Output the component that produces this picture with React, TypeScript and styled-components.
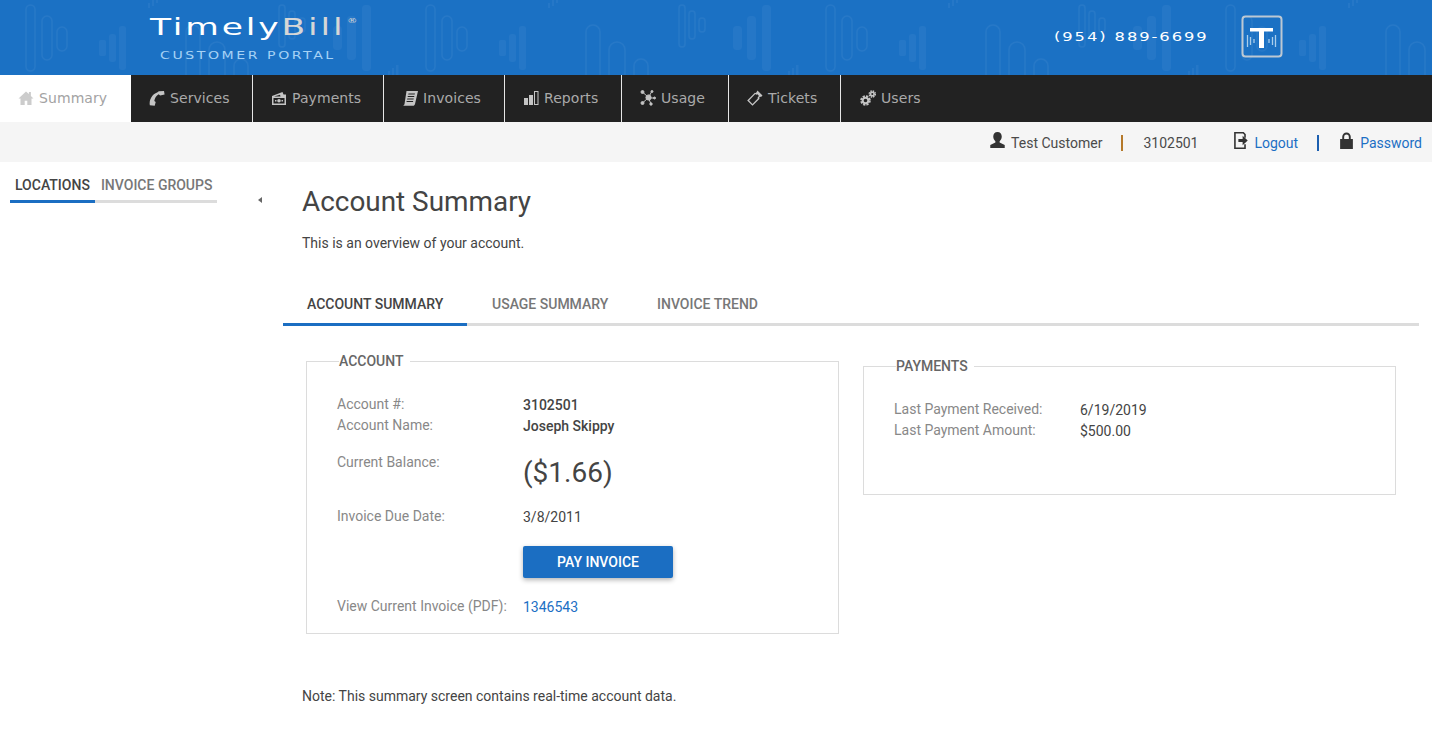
import React from 'react'
import styled, { createGlobalStyle } from 'styled-components'

const GlobalStyle = createGlobalStyle`
  html, body { margin: 0; padding: 0; background: #fff; }
  body { font-family: Roboto, "Liberation Sans", sans-serif; color: #444; font-size: 14px; }
  a { text-decoration: none; color: #1c6fc4; }
`

const Banner = styled.header`
  position: relative;
  height: 75px;
  background: #1b71c4;
  overflow: hidden;
`
const BannerArt = styled.svg`
  position: absolute;
  inset: 0;
  width: 100%;
  height: 100%;
`
const BannerInner = styled.div`
  position: relative;
  height: 100%;
  display: flex;
  align-items: flex-start;
`
const Brand = styled.div`
  margin-left: 150px;
  padding-top: 13px;
  width: 204px;
  display: flex;
  flex-direction: column;
`
const BrandName = styled.div`
  font-family: "DejaVu Sans", sans-serif;
  font-size: 23px;
  line-height: 29px;
  letter-spacing: 1.9px;
  color: #fff;
  white-space: nowrap;
  transform: scaleX(1.5);
  transform-origin: left center;
  span { color: #d6d6d6; }
  sup { font-size: 7px; line-height: 0; letter-spacing: 0; vertical-align: 12px; margin-left: 1px; color: #d6d6d6; }
`
const BrandSub = styled.div`
  margin: 7px 0 0 10px;
  font-family: "DejaVu Sans", sans-serif;
  font-size: 11px;
  line-height: 14px;
  letter-spacing: 2px;
  color: #a6d2f5;
  white-space: nowrap;
  transform: scaleX(1.28);
  transform-origin: left center;
`
const Phone = styled.div`
  margin-left: 700px;
  padding-top: 29px;
  width: 187px;
  font-family: "DejaVu Sans", sans-serif;
  font-size: 11.5px;
  line-height: 16px;
  letter-spacing: 1.35px;
  color: #fff;
  white-space: nowrap;
  transform: scaleX(1.42);
  transform-origin: left center;
`
const LogoMark = styled.svg`
  margin-top: 15px;
  width: 42px;
  height: 43px;
`

const Nav = styled.nav`
  display: flex;
  height: 47px;
  background: #222;
`
const NavItem = styled.a<{ $active?: boolean; $w: number; $pad: number; $last?: boolean }>`
  box-sizing: border-box;
  display: flex;
  align-items: center;
  gap: 5px;
  width: ${p => p.$w}px;
  padding: 0 0 2px ${p => p.$pad}px;
  font-family: "DejaVu Sans", Verdana, sans-serif;
  font-size: 14px;
  letter-spacing: 0.08px;
  color: ${p => (p.$active ? '#a3a3a3' : '#aaa')};
  background: ${p => (p.$active ? '#fff' : 'transparent')};
  border-right: ${p => (p.$active || p.$last ? '0' : '1px solid #e6e6e6')};
  svg { flex: none; width: 16px; height: 16px; fill: ${p => (p.$active ? '#ccc' : '#c4c4c4')}; }
`

const InfoBar = styled.div`
  height: 40px;
  background: #f5f5f5;
  display: flex;
  align-items: center;
  justify-content: flex-end;
  padding-right: 10px;
  font-size: 14px;
  color: #4a4a4a;
`
const InfoItem = styled.span<{ $gap?: number }>`
  display: flex;
  align-items: center;
  gap: 6px;
  margin-left: ${p => p.$gap ?? 0}px;
  padding-top: 2px;
  svg { width: 15px; height: 17px; fill: #333; margin-top: -6px; }
`
const Divider = styled.span<{ $color: string; $gap: number }>`
  width: 2px;
  height: 16px;
  margin: 1px 20px 0 ${p => p.$gap}px;
  background: ${p => p.$color};
`

const Body = styled.div`
  display: flex;
  align-items: flex-start;
`
const Sidebar = styled.aside`
  position: relative;
  box-sizing: border-box;
  width: 283px;
  padding: 14px 0 0 10px;
  flex: none;
`
const SideTabs = styled.div`
  display: flex;
  width: 207px;
  border-bottom: 3px solid #dcdcdc;
`
const SideTab = styled.div<{ $active?: boolean }>`
  box-sizing: border-box;
  margin-bottom: -3px;
  height: 27px;
  padding: 0 5px 0 ${p => (p.$active ? 5 : 6)}px;
  width: ${p => (p.$active ? '85px' : 'auto')};
  font-size: 14px;
  font-weight: 500;
  line-height: 18px;
  white-space: nowrap;
  color: ${p => (p.$active ? '#444' : '#777')};
  border-bottom: 3px solid ${p => (p.$active ? '#1b6ec2' : 'transparent')};
`
const Collapse = styled.span`
  position: absolute;
  top: 35px;
  left: 258px;
  border: 3.5px solid transparent;
  border-right: 4px solid #666;
  border-left: 0;
`

const Main = styled.main`
  flex: 1;
  padding-right: 13px;
  min-width: 0;
`
const Title = styled.h1`
  margin: 22px 0 0 19px;
  font-size: 27.9px;
  line-height: 36px;
  font-weight: 400;
  color: #444;
`
const Lead = styled.p`
  margin: 13px 0 0 19px;
  font-size: 14px;
  line-height: 20px;
  color: #444;
`
const Tabs = styled.div`
  box-sizing: border-box;
  display: flex;
  margin-top: 33px;
  height: 40px;
  border-bottom: 3px solid #dcdcdc;
`
const Tab = styled.div<{ $active?: boolean; $w: number }>`
  box-sizing: border-box;
  flex: none;
  width: ${p => p.$w}px;
  height: 40px;
  padding: 8px 0 0 ${p => (p.$active ? 24 : 25)}px;
  font-size: 14px;
  font-weight: 500;
  line-height: 20px;
  white-space: nowrap;
  color: ${p => (p.$active ? '#444' : '#777')};
  border-bottom: 3px solid ${p => (p.$active ? '#1b6ec2' : 'transparent')};
`

const Panels = styled.div`
  display: flex;
  align-items: flex-start;
  padding-left: 23px;
`
const Fieldset = styled.fieldset<{ $h: number; $top: number; $left: number }>`
  box-sizing: border-box;
  margin: ${p => p.$top}px 0 0 ${p => p.$left}px;
  width: 533px;
  height: ${p => p.$h}px;
  padding: 0 30px;
  border: 1px solid #dcdcdc;
  min-width: 0;
`
const Legend = styled.legend`
  margin-left: 2px;
  padding: 0 6px 0 0;
  font-size: 14px;
  font-weight: 500;
  line-height: 18px;
  color: #666;
`
const Row = styled.div<{ $h: number; $top?: number }>`
  display: grid;
  grid-template-columns: 186px 1fr;
  height: ${p => p.$h}px;
  margin-top: ${p => p.$top ?? 0}px;
  line-height: 20px;
`
const Label = styled.div`
  color: #888;
  font-size: 14px;
  white-space: nowrap;
`
const Value = styled.div<{ $bold?: boolean }>`
  padding-top: 1px;
  color: #444;
  font-size: 14px;
  font-weight: ${p => (p.$bold ? 500 : 400)};
`
const Balance = styled.div`
  font-size: 28px;
  line-height: 36px;
  color: #444;
  margin-top: 3px;
`
const PayButton = styled.button`
  display: block;
  width: 150px;
  height: 32px;
  margin: 0 0 0 186px;
  border: 0;
  border-radius: 2px;
  background: #1b6ec2;
  color: #fff;
  font-family: Roboto, sans-serif;
  font-size: 14px;
  font-weight: 500;
  box-shadow: 0 2px 5px rgba(0, 0, 0, 0.3);
`
const Note = styled.p`
  margin: 52px 0 0 19px;
  font-size: 14px;
  line-height: 20px;
  color: #444;
`

const GEAR_COLOR = '#c4c4c4'

const ICONS: Record<string, React.ReactNode> = {
  Summary: <path d="M8 1.500 0.500 8.500h2V15h4.200v-4.200h2.600V15h4.200V8.500h2l-2.600-2.500V2h-2v2.100z" />,
  Services: <path d="M0.800 15.200C0 9.500 3 4.300 8.500 2.200L9.800 1.200 15 1l.6 3.600-4.500 1-1.400-1.400C7.300 5.500 5.700 8.200 5.300 11l1.400 1-1 3.700z" />,
  Payments: <path d="M1 6 11.500 2l1 2.500H15v10.500H1zm2 .5h6.500l-.5-1.700zM2.500 8v5.500h11V8zM8 9a1.800 1.800 0 1 1 0 3.600A1.800 1.800 0 0 1 8 9zM4 10h1.500v1.500H4zm6.500 0H12v1.500h-1.500z" fillRule="evenodd" />,
  Invoices: <path d="M4.500 1H16l-3 13c-.3 1-1 1.800-2 1.800H0.500c1 0 1.700-.7 2-1.800zm2 2.500-.3 1h6.500l.3-1zm-.6 2.500-.3 1h6.500l.3-1zm-.6 2.500-.3 1h6.500l.3-1zm-.6 2.500-.2 1h6.500l.2-1z" fillRule="evenodd" />,
  Reports: <path d="M1 8h4v7H1zm5-3h4v10H6zm5-4h4.500v14H11zm1 1v12h2.500V2z" fillRule="evenodd" />,
  Usage: (
    <g stroke="#c4c4c4" strokeWidth="1">
      <path d="M2.500 2 8.500 7.500 12 1M14.500 8H8.500L11 14M2.500 13 8.500 7.500" fill="none" />
      <circle cx="8.500" cy="7.500" r="2.600" />
      <circle cx="2.500" cy="2" r="1.500" />
      <circle cx="12" cy="1.500" r="1" />
      <circle cx="14.500" cy="8" r="1" />
      <circle cx="11" cy="14" r="1.200" />
      <circle cx="2.500" cy="13" r="1.500" />
    </g>
  ),
  Tickets: <path d="M10.500 0.500 15.500 5.500l-1.500 1.500c-.6-.4-1.300-.2-1.600.3-.3.500-.2 1 .2 1.400L5.500 15.800 0.200 10.500l7.700-7.700c.5.300 1 .2 1.400-.2zM8.300 4.100 2.100 10.500l3.400 3.400 5.300-5.300c-.3-.7-.1-1.600.5-2.100.3-.2.600-.3.900-.3l-1.700-1.900c-.5.300-1 .4-1.500.3z" fillRule="evenodd" />,
  Users: (
    <g fill="none" stroke={GEAR_COLOR}>
      <circle cx="5.500" cy="10.500" r="2.800" strokeWidth="2" />
      <circle cx="5.500" cy="10.500" r="4.300" strokeWidth="2" strokeDasharray="2.200 1.180" />
      <circle cx="12.300" cy="4" r="1.800" strokeWidth="1.600" />
      <circle cx="12.300" cy="4" r="3" strokeWidth="1.600" strokeDasharray="1.500 0.860" />
    </g>
  ),
}

const NAV = [
  { label: 'Summary', w: 131, pad: 18, active: true },
  { label: 'Services', w: 122, pad: 18 },
  { label: 'Payments', w: 131, pad: 18 },
  { label: 'Invoices', w: 121, pad: 18 },
  { label: 'Reports', w: 117, pad: 18 },
  { label: 'Usage', w: 107, pad: 18 },
  { label: 'Tickets', w: 112, pad: 18 },
  { label: 'Users', w: 100, pad: 19, last: true },
]

const BannerBackground = () => (
  <BannerArt aria-hidden>
    <defs>
      <pattern id="candles" width="400" height="75" patternUnits="userSpaceOnUse">
        <g fill="none" stroke="#fff" strokeOpacity="0.05" strokeWidth="1.500">
          <rect x="26" y="5" width="9" height="66" rx="4.500" />
          <rect x="42" y="16" width="10" height="44" rx="5" />
          <rect x="57" y="27" width="10" height="24" rx="5" />
          <path d="M186 75V32a7 7 0 0 1 14 0v43M209 75V50a8 8 0 0 1 16 0v25M234 75V66a7 7 0 0 1 14 0v9" />
          <rect x="279" y="5" width="6" height="42" rx="3" />
          <rect x="289" y="11" width="6" height="28" rx="3" />
          <rect x="299" y="18" width="6" height="14" rx="3" />
        </g>
        <g fill="#fff" fillOpacity="0.045">
          <rect x="99" y="40" width="7" height="16" rx="2" />
          <rect x="109" y="34" width="7" height="28" rx="3" />
          <rect x="119" y="26" width="7" height="44" rx="3" />
          <rect x="333" y="26" width="9" height="24" rx="4" />
          <rect x="347" y="16" width="9" height="44" rx="4" />
          <rect x="362" y="5" width="9" height="66" rx="4" />
          <rect x="388" y="71" width="2" height="4" />
          <rect x="392" y="68" width="2" height="7" />
          <rect x="396" y="65" width="2.500" height="10" />
          <rect x="148" y="3" width="2" height="5" />
          <rect x="152" y="0" width="2" height="6" />
          <rect x="156" y="0" width="2" height="3" />
        </g>
      </pattern>
    </defs>
    <rect width="100%" height="100%" fill="url(#candles)" />
  </BannerArt>
)

export default function App() {
  return (
    <>
      <GlobalStyle />
      <Banner>
        <BannerBackground />
        <BannerInner>
          <Brand>
            <BrandName>Timely<span>Bill</span><sup>®</sup></BrandName>
            <BrandSub>CUSTOMER PORTAL</BrandSub>
          </Brand>
          <Phone>(954) 889-6699</Phone>
          <LogoMark viewBox="0 0 42 43">
            <rect x="1.500" y="1.500" width="39" height="40" rx="3" fill="none" stroke="#bcc8d3" strokeWidth="2" />
            <path d="M9 13h23v3.500h-9V33h-5V16.500H9z" fill="#fff" />
            <path d="M6.500 20v12M9.500 22v8M13 24v4M28 24v4M31.500 22v8M34.500 20v12" stroke="#a9cdec" strokeWidth="1.300" />
          </LogoMark>
        </BannerInner>
      </Banner>
      <Nav>
        {NAV.map(n => (
          <NavItem key={n.label} $active={n.active} $last={n.last} $w={n.w} $pad={n.pad}>
            <svg viewBox="0 0 16 16">{ICONS[n.label]}</svg>
            {n.label}
          </NavItem>
        ))}
      </Nav>
      <InfoBar>
        <InfoItem>
          <svg viewBox="0 0 14 16"><path d="M7 0c2.500 0 4 1.800 4 4.300 0 1.900-.9 3.400-2 4.300v1.200l4.800 2.400V15H.200v-2.800L5 9.800V8.600C3.900 7.700 3 6.200 3 4.300 3 1.800 4.500 0 7 0z" /></svg>
          Test Customer
        </InfoItem>
        <Divider $color="#b5792a" $gap={19} />
        <InfoItem>3102501</InfoItem>
        <InfoItem $gap={35}>
          <svg viewBox="0 0 14 16"><path d="M1 0h9l2 2v3.500h-1.500V2.700L9.300 1.500H2.500v13h8V11.500H12V16H1zM5 6.500h4V3.500L13.800 8 9 12.500V9.500H5z" fillRule="evenodd" /></svg>
          <a>Logout</a>
        </InfoItem>
        <Divider $color="#1c5fb0" $gap={19} />
        <InfoItem>
          <svg viewBox="0 0 14 16"><path d="M3 6.500V4.500a4 4 0 0 1 8 0v2h2V16H1V6.500zm1.800 0h4.400v-2a2.200 2.200 0 0 0-4.400 0z" fillRule="evenodd" /></svg>
          <a>Password</a>
        </InfoItem>
      </InfoBar>
      <Body>
        <Sidebar>
          <SideTabs>
            <SideTab $active>LOCATIONS</SideTab>
            <SideTab>INVOICE GROUPS</SideTab>
          </SideTabs>
          <Collapse />
        </Sidebar>
        <Main>
          <Title>Account Summary</Title>
          <Lead>This is an overview of your account.</Lead>
          <Tabs>
            <Tab $active $w={184}>ACCOUNT SUMMARY</Tab>
            <Tab $w={165}>USAGE SUMMARY</Tab>
            <Tab $w={160}>INVOICE TREND</Tab>
          </Tabs>
          <Panels>
            <Fieldset $h={282} $top={26} $left={0}>
              <Legend>ACCOUNT</Legend>
              <Row $h={21} $top={24}>
                <Label>Account #:</Label>
                <Value $bold>3102501</Value>
              </Row>
              <Row $h={37}>
                <Label>Account Name:</Label>
                <Value $bold>Joseph Skippy</Value>
              </Row>
              <Row $h={54}>
                <Label>Current Balance:</Label>
                <Balance>($1.66)</Balance>
              </Row>
              <Row $h={40}>
                <Label>Invoice Due Date:</Label>
                <Value>3/8/2011</Value>
              </Row>
              <PayButton>PAY INVOICE</PayButton>
              <Row $h={20} $top={18}>
                <Label>View Current Invoice (PDF):</Label>
                <Value><a>1346543</a></Value>
              </Row>
            </Fieldset>
            <Fieldset $h={138} $top={31} $left={24}>
              <Legend>PAYMENTS</Legend>
              <Row $h={21} $top={24}>
                <Label>Last Payment Received:</Label>
                <Value>6/19/2019</Value>
              </Row>
              <Row $h={20}>
                <Label>Last Payment Amount:</Label>
                <Value>$500.00</Value>
              </Row>
            </Fieldset>
          </Panels>
          <Note>Note: This summary screen contains real-time account data.</Note>
        </Main>
      </Body>
    </>
  )
}
